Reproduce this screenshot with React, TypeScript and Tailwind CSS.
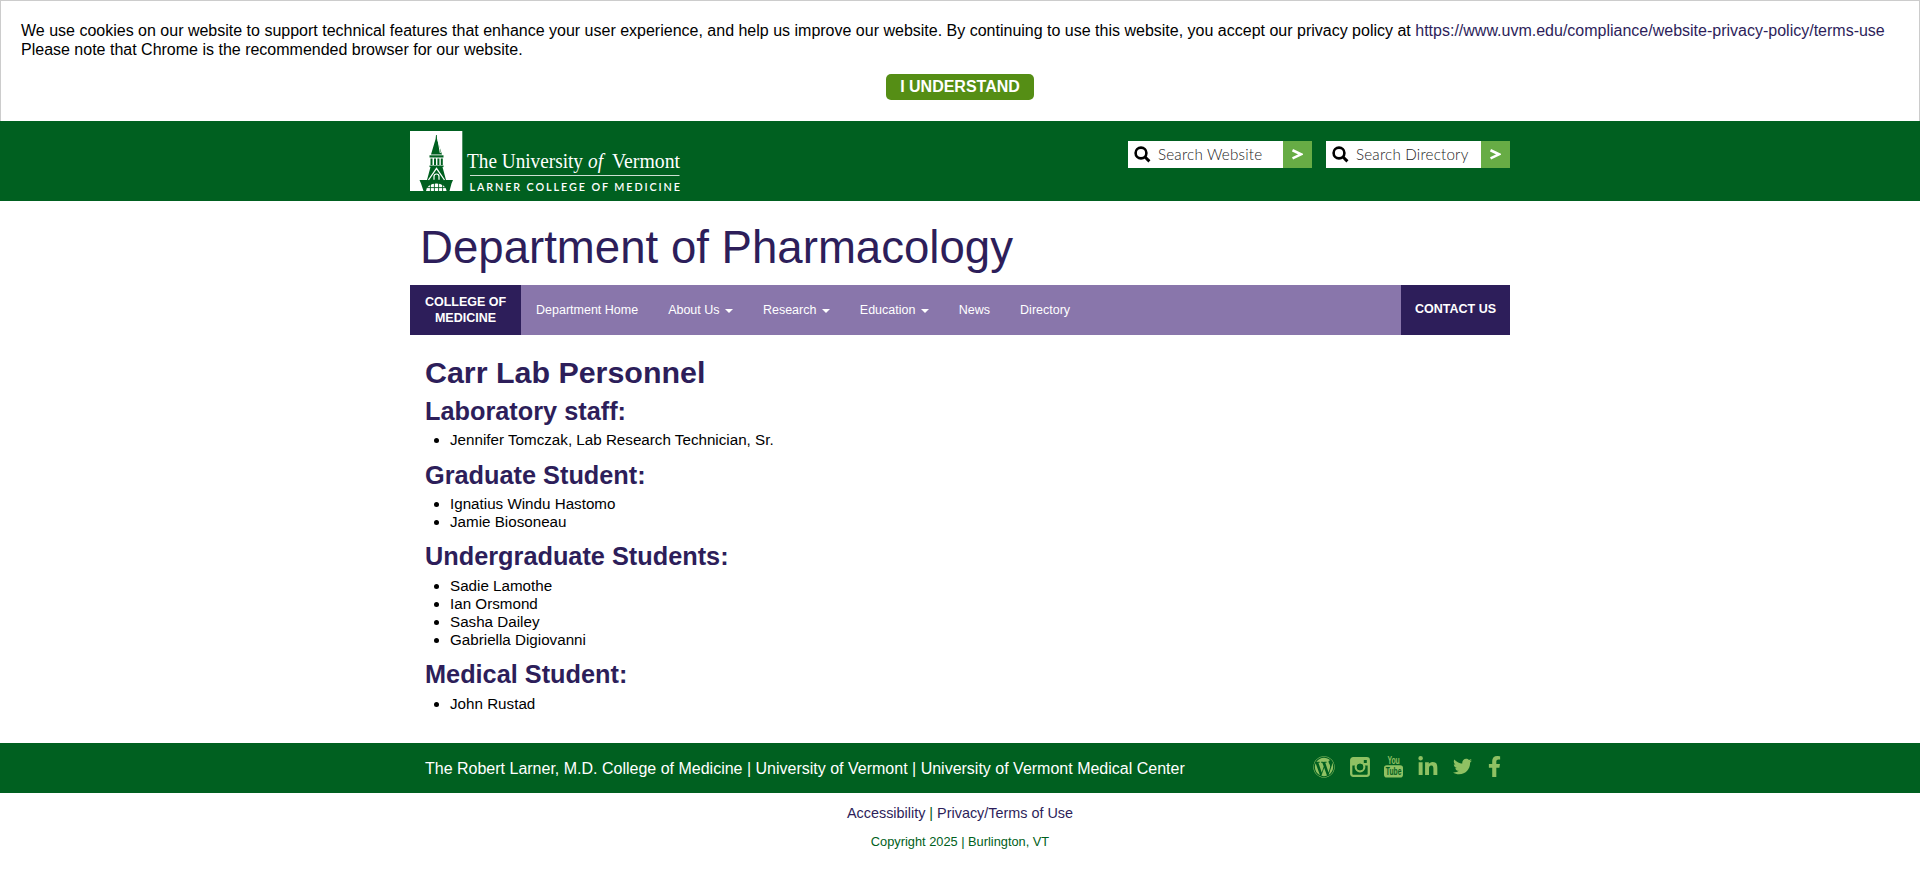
import React from "react";
import { FaWordpress, FaLinkedinIn, FaTwitter, FaFacebookF } from "react-icons/fa";

function Logo() {
  return (
    <svg width="280" height="64" viewBox="0 0 280 64" className="block">
      <rect width="52.3" height="60" fill="#fff" />
      <g fill="#006020">
        <path d="M26 4 L26.8 4 L27 8 L32 23.5 H21 L25.6 8 Z" />
        <rect x="19.5" y="24.3" width="14" height="2.2" />
        <path d="M20.5 27.5h2v6.5h-2zM24 27.5h2v6.5h-2zM27.4 27.5h2v6.5h-2zM30.8 27.5h2v6.5h-2z" />
        <rect x="19.5" y="34.5" width="14" height="1.6" />
        <path d="M20.5 36 H32.5 L36 49 H17 Z" />
        <path d="M9.5 49 H43 L41.5 52.5 L39.5 60 H13.5 L11 52.5 Z" />
      </g>
      <g fill="none" stroke="#fff">
        <path d="M18.5 49 L26.5 37.5 L34.5 49" strokeWidth="1.3" />
        <path d="M24 48.8 V45.5 a2.5 2.5 0 0 1 5 0 V48.8" strokeWidth="1.2" />
        <path d="M28 9 L30.3 22" strokeWidth="1" />
      </g>
      <path d="M16 60 a10.3 7.4 0 0 1 20.6 0 Z" fill="#fff" />
      <path d="M20.4 53V60M24.4 52V60M28.6 52V60M32.6 53V60M17 56.6H36" stroke="#006020" strokeWidth="0.9" />
      <g fill="#fff">
        <text x="57" y="36.8" fontSize="21.5" textLength="116" lengthAdjust="spacingAndGlyphs" fontFamily="'Liberation Serif', serif">The University</text>
        <text x="178" y="36.8" fontSize="21.5" textLength="15" lengthAdjust="spacingAndGlyphs" fontStyle="italic" fontFamily="'Liberation Serif', serif">of</text>
        <text x="202" y="36.8" fontSize="21.5" textLength="68" lengthAdjust="spacingAndGlyphs" fontFamily="'Liberation Serif', serif">Vermont</text>
        <rect x="60" y="44" width="209.5" height="0.8" />
        <text x="59.5" y="59.6" fontSize="10.8" fontWeight="600" textLength="210.5" fontFamily="Lato, sans-serif">LARNER COLLEGE OF MEDICINE</text>
      </g>
    </svg>
  );
}

function SearchBox({ label }: { label: string }) {
  return (
    <form className="flex h-[27px] w-[184px]">
      <div className="flex flex-1 items-center bg-white pl-[6px] text-[#222]">
        <svg width="17" height="17" viewBox="0 0 17 17" fill="none" stroke="#000" className="mr-[7px]">
          <circle cx="7" cy="7" r="5.4" strokeWidth="2.6" />
          <path d="M10.8 10.8 L15.4 15.4" strokeWidth="3" />
        </svg>
        <span className="whitespace-nowrap font-['Lato',sans-serif] text-[15.2px] font-light tracking-[0.2px]">{label}</span>
      </div>
      <button type="button" aria-label={label} className="flex w-[29px] items-center justify-center bg-[#67ac45]">
        <svg width="11" height="11" viewBox="0 0 11 11" fill="none" stroke="#fff" strokeWidth="2.6">
          <path d="M0.5 1.2 L9 5.3 L0.5 9.4" />
        </svg>
      </button>
    </form>
  );
}

function InstagramIcon() {
  return (
    <svg width="20" height="20" viewBox="0 0 20 20" fill="none" stroke="currentColor" className="ml-[15px]">
      <rect x="1.2" y="1.2" width="17.6" height="17.6" rx="2" strokeWidth="2.3" />
      <path d="M2 2 H18 V8.4 H14.4 A4.8 4.8 0 0 0 5.6 8.4 H2 Z" fill="currentColor" stroke="none" />
      <circle cx="10" cy="10" r="4.3" strokeWidth="2.2" />
      <circle cx="10" cy="10" r="3.2" fill="#006020" stroke="none" />
      <rect x="13.8" y="3" width="3" height="3" fill="#006020" stroke="none" />
    </svg>
  );
}

function YouTubeIcon() {
  return (
    <svg width="19" height="23" viewBox="0 0 19 23" className="ml-[14px] overflow-visible" fontFamily="'Liberation Sans', sans-serif" fontWeight="700">
      <text x="3.4" y="8.6" fontSize="10.5" textLength="12.4" lengthAdjust="spacingAndGlyphs" fill="currentColor">You</text>
      <rect x="0" y="10.2" width="19" height="12.4" rx="2.8" fill="currentColor" />
      <text x="1.8" y="20.4" fontSize="10.5" textLength="15.6" lengthAdjust="spacingAndGlyphs" fill="#006020">Tube</text>
    </svg>
  );
}

const navItems = [
  { label: "Department Home" },
  { label: "About Us", menu: true },
  { label: "Research", menu: true },
  { label: "Education", menu: true },
  { label: "News" },
  { label: "Directory" },
];

const groups = [
  { title: "Laboratory staff:", people: ["Jennifer Tomczak, Lab Research Technician, Sr."] },
  { title: "Graduate Student:", people: ["Ignatius Windu Hastomo", "Jamie Biosoneau"] },
  { title: "Undergraduate Students:", people: ["Sadie Lamothe", "Ian Orsmond", "Sasha Dailey", "Gabriella Digiovanni"] },
  { title: "Medical Student:", people: ["John Rustad"] },
];

export default function App() {
  return (
    <div className="min-h-[888px] bg-white font-['Liberation_Sans',Arial,sans-serif] text-[15.2px] leading-[1.2] text-black">
      <section className="h-[121px] border border-b-0 border-[#ccc] px-5 pt-5">
        <p className="text-[16px] leading-[19.2px]">
          We use cookies on our website to support technical features that enhance your user experience, and help us improve our website. By continuing to use this website, you accept our privacy policy at{" "}
          <a className="text-[#2d1e5a]">https://www.uvm.edu/compliance/website-privacy-policy/terms-use</a>
          <br />
          Please note that Chrome is the recommended browser for our website.
        </p>
        <div className="mt-[15px] flex justify-center">
          <button className="h-[26px] w-[148px] rounded-[5px] bg-[#558e15] text-[16px] font-bold leading-[26px] text-white">I UNDERSTAND</button>
        </div>
      </section>

      <header className="h-20 bg-[#006020]">
        <div className="mx-auto flex w-[1100px] justify-between pt-[10px]">
          <Logo />
          <div className="flex gap-[14px] pt-[10px]">
            <SearchBox label="Search Website" />
            <SearchBox label="Search Directory" />
          </div>
        </div>
      </header>

      <div className="mx-auto w-[1100px]">
        <div className="h-[84px] pl-[10px] pt-[20px] text-[45.6px] leading-[54px] text-[#2d1e5a]">Department of Pharmacology</div>
        <nav className="flex h-[50px] bg-[#8976ab] text-[12.5px] text-white">
          <a className="flex w-[111px] items-center justify-center bg-[#2d1e5a] text-center font-bold leading-4">COLLEGE OF<br />MEDICINE</a>
          {navItems.map((item) => (
            <a key={item.label} className="flex items-center px-[15px]">
              {item.label}
              {item.menu && <span className="ml-[5.4px] mt-[2px] border-x-4 border-t-4 border-x-transparent border-t-white" />}
            </a>
          ))}
          <a className="ml-auto flex w-[109px] items-center justify-center bg-[#2d1e5a] pb-[2px] font-bold">CONTACT US</a>
        </nav>

        <main className="h-[408px] px-[15px] pt-[19px]">
          <h1 className="mb-[6px] text-[30.4px] font-bold leading-[36px] text-[#2d1e5a]">Carr Lab Personnel</h1>
          {groups.map((group) => (
            <section key={group.title} className="mb-[9.9px]">
              <h2 className="mb-[5.4px] text-[25.3px] font-bold leading-[30px] text-[#2d1e5a]">{group.title}</h2>
              <ul className="list-disc pl-[25px] leading-[18.24px]">
                {group.people.map((person) => <li key={person}>{person}</li>)}
              </ul>
            </section>
          ))}
        </main>
      </div>

      <footer>
        <div className="h-[50px] bg-[#006020]">
          <div className="mx-auto flex h-full w-[1100px] items-center justify-between pl-[15px] pr-[5px]">
            <div className="pt-[2px] text-[16px] text-white">The Robert Larner, M.D. College of Medicine | University of Vermont | University of Vermont Medical Center</div>
            <div className="flex items-center pb-[3px] text-[#8fc163]">
              <FaWordpress size={22} />
              <InstagramIcon />
              <YouTubeIcon />
              <FaLinkedinIn size={21.7} className="ml-[14px]" />
              <FaTwitter size={19} className="ml-[14px]" />
              <FaFacebookF size={21} className="ml-[12px]" />
            </div>
          </div>
        </div>
        <div className="pt-[12px] text-center text-[14.4px] text-[#006020]">
          <a className="text-[#2d1e5a]">Accessibility</a> | <a className="text-[#2d1e5a]">Privacy/Terms of Use</a>
        </div>
        <div className="pt-[12px] text-center text-[12.8px] text-[#006020]">Copyright 2025 | Burlington, VT</div>
      </footer>
    </div>
  );
}
